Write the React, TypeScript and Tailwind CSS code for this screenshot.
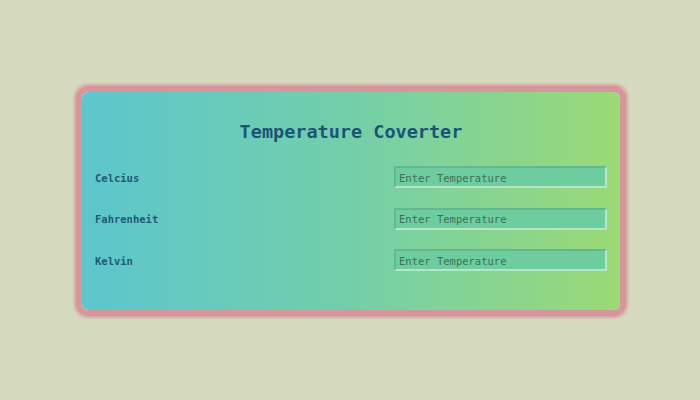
import React from 'react';

const units = ['Celcius', 'Fahrenheit', 'Kelvin'];

export default function App() {
  return (
    <div className="w-[700px] h-[400px] bg-[#d6dbbf] flex items-center justify-center pt-[2px] pl-[2px] font-['DejaVu_Sans_Mono',monospace]">
      <div className="w-[550px] h-[230px] rounded-[12px] border-[6px] border-[#d5979c] shadow-[0_0_3px_2px_#d9a3a6] overflow-hidden">
        <div className="w-full h-full rounded-[7px] bg-gradient-to-r from-[#5cc6cd] via-[#73cfa9] to-[#9ad974] px-[13px] pt-[26px]">
          <h1 className="text-center text-[18.5px] font-bold text-[#1a5577] leading-[28px]">
            Temperature Coverter
          </h1>
          <div className="flex flex-col gap-[19.5px] mt-[20px]">
            {units.map((u) => (
              <div key={u} className="flex items-center justify-between h-[22px]">
                <label className="text-[10.5px] font-bold text-[#1f5a74] pt-[3px]">{u}</label>
                <input
                  type="text"
                  placeholder="Enter Temperature"
                  className="w-[213px] h-[22px] bg-[#6ecd9f] border-2 border-t-[#63b791] border-l-[#63b791] border-b-[#b6e5c6] border-r-[#b6e5c6] px-[3px] pt-[1px] text-[10.5px] text-[#2e6b50] placeholder:text-[#3a7258] outline-none font-['DejaVu_Sans_Mono',monospace]"
                />
              </div>
            ))}
          </div>
        </div>
      </div>
    </div>
  );
}
